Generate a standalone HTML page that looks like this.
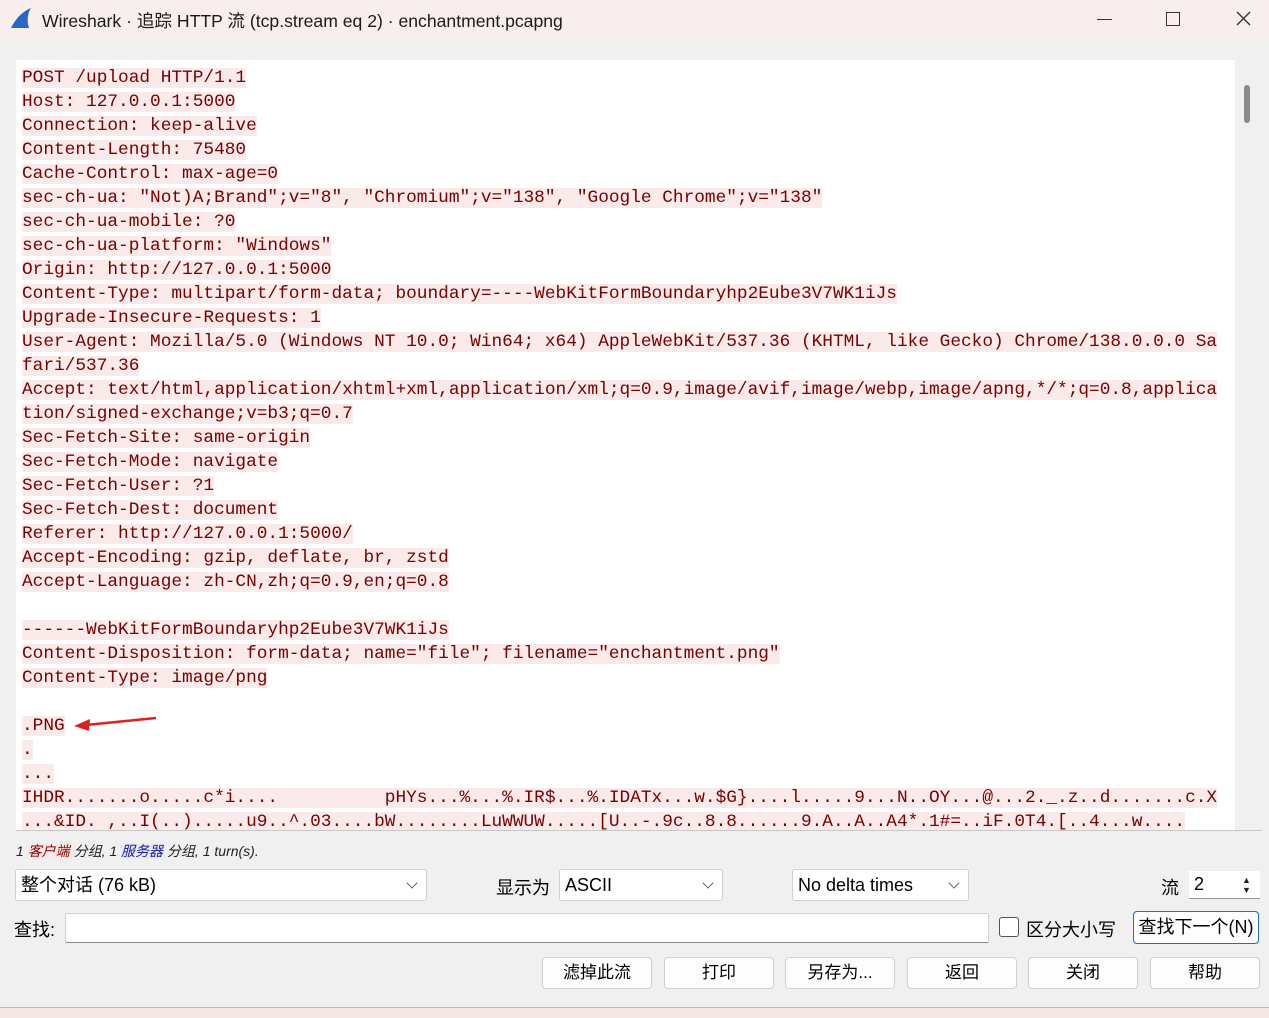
<!DOCTYPE html>
<html><head><meta charset="utf-8"><style>
body{margin:0;width:1269px;height:1017px;overflow:hidden;background:#f0f0f0;font-family:"Liberation Sans","Noto Sans CJK SC",sans-serif;position:relative}
.title{position:absolute;left:0;top:0;width:1269px;height:40px;background:#f8eeee;}
.title .t{position:absolute;left:42px;top:8px;font-size:17.6px;color:#1a1a1a}
.txt{position:absolute;left:16px;top:60px;width:1219px;height:770px;background:#fff;overflow:hidden}
.txt div{height:24px;line-height:24px;font-family:"Liberation Mono",monospace;font-size:17.8px;color:#780000;padding-left:6px;white-space:pre}
.txt span{background:#fbeaea}
.sb{position:absolute;left:1235px;top:60px;width:27px;height:770px;background:#f0f0f0}
.abs{position:absolute}
.box{position:absolute;background:#fff;border:1px solid #d0d0d0;border-radius:3px;font-size:18px;box-sizing:border-box;padding-left:5px;line-height:30px}
.btn{position:absolute;top:957px;width:110px;height:32px;background:#fdfdfd;border:1px solid #d0d0d0;border-radius:4px;box-sizing:border-box;text-align:center;line-height:30px;font-size:17px}
.chev{position:absolute;right:10px;top:9px;width:7px;height:7px;border-right:1.2px solid #666;border-bottom:1.2px solid #666;transform:rotate(45deg)}
</style></head><body>
<div class="title">
<svg class="abs" style="left:9px;top:6px" width="24" height="24" viewBox="0 0 24 24"><path d="M2 22 C6 14 12 6 22 2 C18 8 18 16 20 22 Z" fill="#2a68c8"/></svg>
<div class="t">Wireshark · 追踪 HTTP 流 (tcp.stream eq 2) · enchantment.pcapng</div>
<div class="abs" style="left:1097px;top:19px;width:15px;height:1px;background:#333"></div>
<div class="abs" style="left:1166px;top:12px;width:12px;height:12px;border:1.3px solid #333"></div>
<svg class="abs" style="left:1236px;top:11px" width="15" height="15"><path d="M1 1L14 14M14 1L1 14" stroke="#333" stroke-width="1.4"/></svg>
</div>
<div class="txt" style="padding-top:6px;box-sizing:border-box">
<div><span>POST /upload HTTP/1.1</span></div>
<div><span>Host: 127.0.0.1:5000</span></div>
<div><span>Connection: keep-alive</span></div>
<div><span>Content-Length: 75480</span></div>
<div><span>Cache-Control: max-age=0</span></div>
<div><span>sec-ch-ua: "Not)A;Brand";v="8", "Chromium";v="138", "Google Chrome";v="138"</span></div>
<div><span>sec-ch-ua-mobile: ?0</span></div>
<div><span>sec-ch-ua-platform: "Windows"</span></div>
<div><span>Origin: http://127.0.0.1:5000</span></div>
<div><span>Content-Type: multipart/form-data; boundary=----WebKitFormBoundaryhp2Eube3V7WK1iJs</span></div>
<div><span>Upgrade-Insecure-Requests: 1</span></div>
<div><span>User-Agent: Mozilla/5.0 (Windows NT 10.0; Win64; x64) AppleWebKit/537.36 (KHTML, like Gecko) Chrome/138.0.0.0 Sa</span></div>
<div><span>fari/537.36</span></div>
<div><span>Accept: text/html,application/xhtml+xml,application/xml;q=0.9,image/avif,image/webp,image/apng,*/*;q=0.8,applica</span></div>
<div><span>tion/signed-exchange;v=b3;q=0.7</span></div>
<div><span>Sec-Fetch-Site: same-origin</span></div>
<div><span>Sec-Fetch-Mode: navigate</span></div>
<div><span>Sec-Fetch-User: ?1</span></div>
<div><span>Sec-Fetch-Dest: document</span></div>
<div><span>Referer: http://127.0.0.1:5000/</span></div>
<div><span>Accept-Encoding: gzip, deflate, br, zstd</span></div>
<div><span>Accept-Language: zh-CN,zh;q=0.9,en;q=0.8</span></div>
<div></div>
<div><span>------WebKitFormBoundaryhp2Eube3V7WK1iJs</span></div>
<div><span>Content-Disposition: form-data; name="file"; filename="enchantment.png"</span></div>
<div><span>Content-Type: image/png</span></div>
<div></div>
<div><span>.PNG</span></div>
<div><span>.</span></div>
<div><span>...</span></div>
<div><span>IHDR.......o.....c*i....          pHYs...%...%.IR$...%.IDATx...w.$G}....l.....9...N..OY...@...2._.z..d.......c.X</span></div>
<div><span>...&amp;ID. ,..I(..).....u9..^.03....bW........LuWWUW.....[U..-.9c..8.8......9.A..A..A4*.1#=..iF.0T4.[..4...w....</span></div>
</div>
<svg class="abs" style="left:70px;top:714px" width="90" height="20"><line x1="86" y1="4" x2="16" y2="11" stroke="#e02020" stroke-width="2.5"/><path d="M4 12 L20 5 L19 17 Z" fill="#e02020"/></svg>
<div class="sb"><div class="abs" style="left:9px;top:25px;width:6px;height:38px;background:#8a8a8a;border-radius:3px"></div></div>
<div class="abs" style="left:16px;top:830px;width:1246px;height:1px;background:#c8c8c8"></div>
<div class="abs" style="left:16px;top:841px;font-size:14px;font-style:italic;color:#222">1 <span style="color:#8b0000;background:#fbeaea">客户端</span> 分组, 1 <span style="color:#1a1a9b;background:#eaeafb">服务器</span> 分组, 1 turn(s).</div>
<div class="box" style="left:15px;top:869px;width:412px;height:32px">整个对话 (76 kB)<div class="chev"></div></div>
<div class="abs" style="left:496px;top:874px;font-size:18px">显示为</div>
<div class="box" style="left:559px;top:869px;width:164px;height:32px">ASCII<div class="chev"></div></div>
<div class="box" style="left:792px;top:869px;width:177px;height:32px">No delta times<div class="chev"></div></div>
<div class="abs" style="left:1161px;top:874px;font-size:18px">流</div>
<div class="box" style="left:1189px;top:871px;width:71px;height:28px;line-height:26px;border:none;border-bottom:1px solid #999;border-radius:0">2
<div class="abs" style="left:53px;top:4px;font-size:9px;line-height:10px;color:#222">▲<br>▼</div></div>
<div class="abs" style="left:14px;top:916px;font-size:18px">查找:</div>
<div class="box" style="left:65px;top:913px;width:924px;height:30px;border-radius:2px;border-bottom-color:#888"></div>
<div class="abs" style="left:999px;top:917px;width:18px;height:18px;border:1.3px solid #555;border-radius:3px;background:#fff"></div>
<div class="abs" style="left:1026px;top:916px;font-size:18px">区分大小写</div>
<div class="abs" style="left:1133px;top:911px;width:126px;height:33px;border:1.5px solid #1a6fc8;border-radius:4px;background:#fdfdfd;box-sizing:border-box;text-align:center;line-height:30px;font-size:18px">查找下一个(N)</div>
<div class="btn" style="left:542px">滤掉此流</div>
<div class="btn" style="left:664px">打印</div>
<div class="btn" style="left:785px">另存为...</div>
<div class="btn" style="left:907px">返回</div>
<div class="btn" style="left:1028px">关闭</div>
<div class="btn" style="left:1150px">帮助</div>
<div class="abs" style="left:0;top:1007px;width:1269px;height:10px;background:#f3e6e4;border-top:1px solid #bbb"></div>
</body></html>
